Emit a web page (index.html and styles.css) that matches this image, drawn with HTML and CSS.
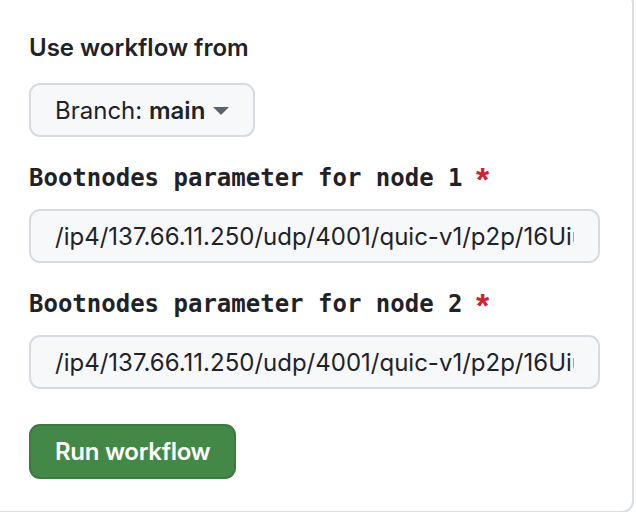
FILE: index.html
```html
<!DOCTYPE html>
<html>
<head>
<meta charset="utf-8">
<link rel="stylesheet" href="styles.css">
</head>
<body>
<div class="panel">
  <div class="label">Use workflow from</div>
  <button class="branch-btn"><span>Branch: <b>main</b></span><span class="caret"></span></button>

  <div class="field">
    <label class="mono-label">Bootnodes parameter for node 1 <span class="req">*</span></label>
    <input class="text-input" type="text" value="/ip4/137.66.11.250/udp/4001/quic-v1/p2p/16Uiu2HAmQ4Z5n8">
  </div>

  <div class="field">
    <label class="mono-label">Bootnodes parameter for node 2 <span class="req">*</span></label>
    <input class="text-input" type="text" value="/ip4/137.66.11.250/udp/4001/quic-v1/p2p/16Uiu2HAmQ4Z5n8">
  </div>

  <button class="run-btn">Run workflow</button>
</div>
</body>
</html>
```

FILE: styles.css
```css
html, body {
  margin: 0;
  padding: 0;
  background: #ffffff;
  overflow: hidden;
}

body {
  font-family: "Inter", "Liberation Sans", sans-serif;
  color: #1f2328;
}

.panel {
  box-sizing: border-box;
  width: 646px;
  margin: -8px 0 0 -12px;
  border: 2px solid #d8dee4;
  border-radius: 12px;
  background: #fff;
  padding: 36px 0 32px 39px;
  display: flex;
  flex-direction: column;
  align-items: flex-start;
}

.label {
  font-size: 24px;
  font-weight: 600;
  line-height: 36px;
}

.branch-btn {
  margin-top: 17px;
  box-sizing: border-box;
  height: 54px;
  display: flex;
  align-items: center;
  gap: 8px;
  padding: 0 24px;
  border: 2px solid #d5dbe1;
  border-radius: 11px;
  background: #f6f8fa;
  font-family: inherit;
  font-size: 24px;
  color: #1f2328;
}

.branch-btn b {
  font-weight: 600;
}

.caret {
  width: 0;
  height: 0;
  border-left: 8px solid transparent;
  border-right: 8px solid transparent;
  border-top: 8px solid #59636e;
  margin-top: 2px;
}

.field {
  display: flex;
  flex-direction: column;
  align-items: flex-start;
  margin-top: 23px;
}

.field + .field {
  margin-top: 23px;
}

.mono-label {
  font-family: "DejaVu Sans Mono", "Liberation Mono", monospace;
  font-size: 24px;
  font-weight: 700;
  line-height: 36px;
}

.req {
  color: #cf222e;
  font-family: "Liberation Sans", sans-serif;
  font-size: 34px;
  line-height: 0;
  position: relative;
  top: 5px;
  margin-left: -1px;
}

.text-input {
  margin-top: 13px;
  box-sizing: border-box;
  width: 571px;
  height: 54px;
  padding: 0 24px;
  border: 2px solid #d5dbe1;
  border-radius: 11px;
  background: #f6f8fa;
  font-family: "Inter", "Liberation Sans", sans-serif;
  font-size: 24px;
  color: #1f2328;
  outline: none;
}

.run-btn {
  margin-top: 35px;
  box-sizing: border-box;
  height: 55px;
  padding: 0 24px;
  border: 2px solid #3b7a3f;
  border-radius: 11px;
  background: #438847;
  color: #fff;
  font-family: inherit;
  font-size: 24px;
  font-weight: 600;
  letter-spacing: -0.3px;
}
```
